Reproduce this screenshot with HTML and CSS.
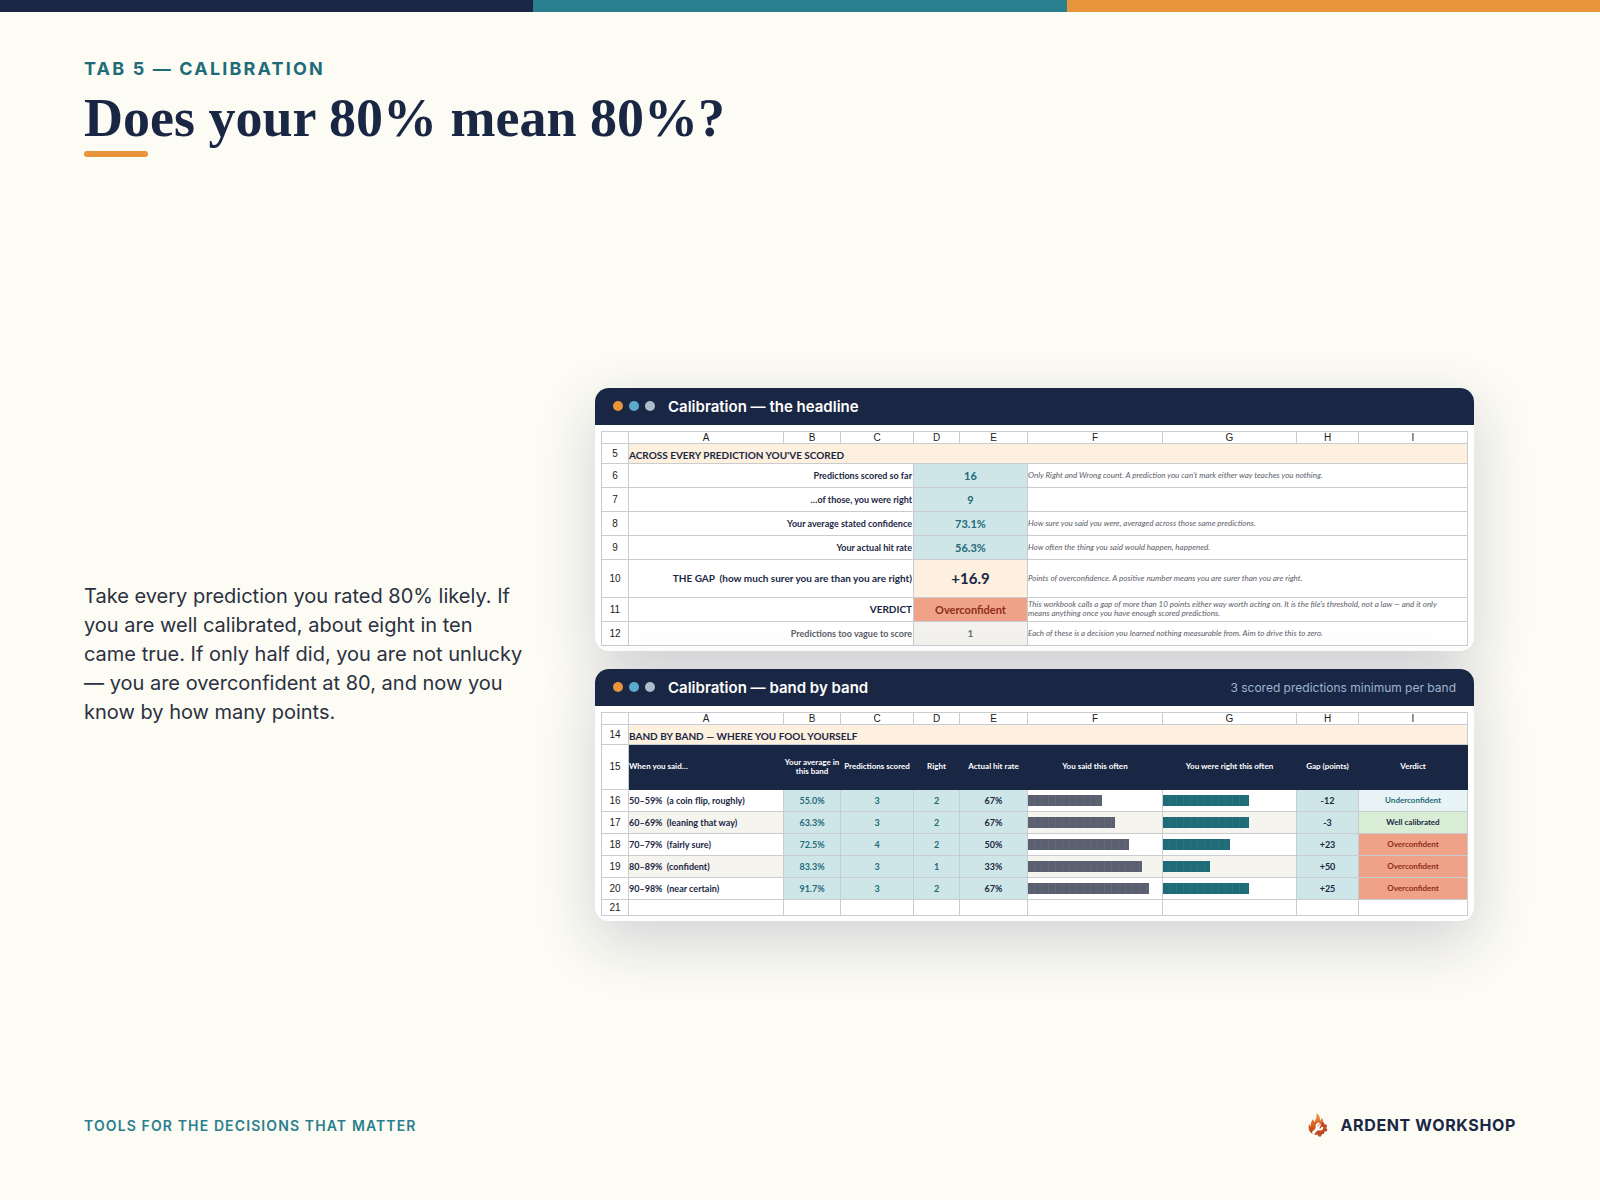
FILE: index.html
```html
<!DOCTYPE html>
<html lang="en">
<head>
    <meta charset="UTF-8">
    <meta name="viewport" content="width=device-width, initial-scale=1.0">
    <title>Does your 80% mean 80%?</title>
    <link rel="stylesheet" href="styles.css">
</head>
<body>
    <div class="stripes">
        <div class="stripe navy"></div>
        <div class="stripe teal"></div>
        <div class="stripe orange"></div>
    </div>
    <div class="slide">
        <header class="head">
            <p class="eyebrow">TAB 5 — CALIBRATION</p>
            <h1 class="title">Does your 80% mean 80%?</h1>
            <div class="rule"></div>
        </header>

        <main class="content">
            <p class="text">Take every prediction you rated 80% likely. If you are well calibrated, about eight in ten came true. If only half did, you are not unlucky — you are overconfident at 80, and now you know by how many points.</p>
            <div class="panels">
                <section class="panel">
                    <div class="panel-head">
                        <span class="dot orange"></span>
                        <span class="dot blue"></span>
                        <span class="dot gray"></span>
                        <h2 class="panel-title">Calibration — the headline</h2>
                    </div>
                    <div class="panel-body">
                        <table class="sheet">
                            <colgroup>
                                <col class="col-n"><col class="col-a"><col class="col-b"><col class="col-c"><col class="col-d"><col class="col-e"><col class="col-f"><col class="col-g"><col class="col-h"><col class="col-i">
                            </colgroup>
                            <tr class="letters"><th></th><th>A</th><th>B</th><th>C</th><th>D</th><th>E</th><th>F</th><th>G</th><th>H</th><th>I</th></tr>
                            <tr class="section"><th>5</th><td colspan="9">ACROSS EVERY PREDICTION YOU'VE SCORED</td></tr>
                            <tr class="stat"><th>6</th><td class="label" colspan="3">Predictions scored so far</td><td class="value" colspan="2">16</td><td class="note" colspan="4">Only Right and Wrong count. A prediction you can't mark either way teaches you nothing.</td></tr>
                            <tr class="stat"><th>7</th><td class="label" colspan="3">…of those, you were right</td><td class="value" colspan="2">9</td><td class="note" colspan="4"></td></tr>
                            <tr class="stat"><th>8</th><td class="label" colspan="3">Your average stated confidence</td><td class="value" colspan="2">73.1%</td><td class="note" colspan="4">How sure you said you were, averaged across those same predictions.</td></tr>
                            <tr class="stat"><th>9</th><td class="label" colspan="3">Your actual hit rate</td><td class="value" colspan="2">56.3%</td><td class="note" colspan="4">How often the thing you said would happen, happened.</td></tr>
                            <tr class="stat gap"><th>10</th><td class="label big" colspan="3">THE GAP&nbsp; (how much surer you are than you are right)</td><td class="value" colspan="2">+16.9</td><td class="note" colspan="4">Points of overconfidence. A positive number means you are surer than you are right.</td></tr>
                            <tr class="stat"><th>11</th><td class="label big" colspan="3">VERDICT</td><td class="value over" colspan="2">Overconfident</td><td class="note" colspan="4">This workbook calls a gap of more than 10 points either way worth acting on. It is the file's threshold, not a law — and it only means anything once you have enough scored predictions.</td></tr>
                            <tr class="stat vague"><th>12</th><td class="label" colspan="3">Predictions too vague to score</td><td class="value" colspan="2">1</td><td class="note" colspan="4">Each of these is a decision you learned nothing measurable from. Aim to drive this to zero.</td></tr>
                        </table>
                    </div>
                </section>

                <section class="panel">
                    <div class="panel-head">
                        <span class="dot orange"></span>
                        <span class="dot blue"></span>
                        <span class="dot gray"></span>
                        <h2 class="panel-title">Calibration — band by band</h2>
                        <span class="panel-note">3 scored predictions minimum per band</span>
                    </div>
                    <div class="panel-body">
                        <table class="sheet">
                            <colgroup>
                                <col class="col-n"><col class="col-a"><col class="col-b"><col class="col-c"><col class="col-d"><col class="col-e"><col class="col-f"><col class="col-g"><col class="col-h"><col class="col-i">
                            </colgroup>
                            <tr class="letters"><th></th><th>A</th><th>B</th><th>C</th><th>D</th><th>E</th><th>F</th><th>G</th><th>H</th><th>I</th></tr>
                            <tr class="section"><th>14</th><td colspan="9">BAND BY BAND — WHERE YOU FOOL YOURSELF</td></tr>
                            <tr class="names"><th>15</th><td class="first">When you said…</td><td>Your average in this band</td><td>Predictions scored</td><td>Right</td><td>Actual hit rate</td><td>You said this often</td><td>You were right this often</td><td>Gap (points)</td><td>Verdict</td></tr>
                            <tr class="band"><th>16</th><td class="range">50–59%&nbsp; (a coin flip, roughly)</td><td class="num">55.0%</td><td class="num">3</td><td class="num">2</td><td class="num dark">67%</td><td class="chart"><div class="bar said" style="width: 55%;"></div></td><td class="chart"><div class="bar right" style="width: 65%;"></div></td><td class="num dark">-12</td><td class="verdict under">Underconfident</td></tr>
                            <tr class="band alt"><th>17</th><td class="range">60–69%&nbsp; (leaning that way)</td><td class="num">63.3%</td><td class="num">3</td><td class="num">2</td><td class="num dark">67%</td><td class="chart"><div class="bar said" style="width: 65%;"></div></td><td class="chart"><div class="bar right" style="width: 65%;"></div></td><td class="num dark">-3</td><td class="verdict well">Well calibrated</td></tr>
                            <tr class="band"><th>18</th><td class="range">70–79%&nbsp; (fairly sure)</td><td class="num">72.5%</td><td class="num">4</td><td class="num">2</td><td class="num dark">50%</td><td class="chart"><div class="bar said" style="width: 75%;"></div></td><td class="chart"><div class="bar right" style="width: 50%;"></div></td><td class="num dark">+23</td><td class="verdict over">Overconfident</td></tr>
                            <tr class="band alt"><th>19</th><td class="range">80–89%&nbsp; (confident)</td><td class="num">83.3%</td><td class="num">3</td><td class="num">1</td><td class="num dark">33%</td><td class="chart"><div class="bar said" style="width: 85%;"></div></td><td class="chart"><div class="bar right" style="width: 35%;"></div></td><td class="num dark">+50</td><td class="verdict over">Overconfident</td></tr>
                            <tr class="band"><th>20</th><td class="range">90–98%&nbsp; (near certain)</td><td class="num">91.7%</td><td class="num">3</td><td class="num">2</td><td class="num dark">67%</td><td class="chart"><div class="bar said" style="width: 90%;"></div></td><td class="chart"><div class="bar right" style="width: 65%;"></div></td><td class="num dark">+25</td><td class="verdict over">Overconfident</td></tr>
                            <tr class="last"><th>21</th><td></td><td></td><td></td><td></td><td></td><td></td><td></td><td></td><td></td></tr>
                        </table>
                    </div>
                </section>
            </div>
        </main>

        <footer class="foot">
            <p class="tagline">TOOLS FOR THE DECISIONS THAT MATTER</p>
            <div class="brand">
                <svg class="logo" viewBox="0 0 20 24" aria-hidden="true">
                    <defs>
                        <linearGradient id="fire" x1="0" y1="0" x2="0" y2="1">
                            <stop offset="0" stop-color="#f0983c"/>
                            <stop offset="0.5" stop-color="#dc6427"/>
                            <stop offset="1" stop-color="#b03c1c"/>
                        </linearGradient>
                    </defs>
                    <!-- flame -->
                    <path fill="url(#fire)" d="M8.500 0C12 3 12 5 12 8L14 5C15 7 15 8 15 10L11 12L5 21C1 19 0 16 1 11L3 14C2 10 4 8 5 6L6.500 9C8 6 9 4 8.500 0Z"/>
                    <!-- gear -->
                    <path fill="#c04a20" d="M14 9L16 9.500L16.500 11.500L18.500 11.500L19 13.500L18 15L19.500 16.500L18.500 18.500L16.500 18.500L16 21L14 21L13 23.500H10.500L9.500 21.500L7 22L6 20L12 14Z"/>
                    <!-- wrench -->
                    <path fill="none" stroke="#fcfbf4" stroke-width="3" stroke-linecap="round" d="M5.500 19.500L10 15"/>
                    <path fill="none" stroke="#fcfbf4" stroke-width="2" d="M11.500 10.500A3 3 0 1 0 14.500 14"/>
                </svg>
                <span class="brand-name">ARDENT WORKSHOP</span>
            </div>
        </footer>
    </div>
</body>
</html>
```
FILE: styles.css
```css
* {
    margin: 0;
    padding: 0;
    box-sizing: border-box;
}
body {
    min-height: 100vh;
    display: flex;
    flex-direction: column;
    background: #fcfbf4;
    color: #1a2744;
    font-family: Inter, "Liberation Sans", sans-serif;
}
.stripes {
    display: flex;
    height: 12px;
}
.stripe {
    flex: 1;
}
.navy {
    background: #1a2744;
}
.teal {
    background: #2a7f8e;
}
.orange {
    background: #e8943a;
}
.slide {
    flex: 1;
    display: flex;
    flex-direction: column;
    padding: 44px 84px 63px;
}
.eyebrow {
    font-size: 18px;
    line-height: 26px;
    font-weight: 700;
    letter-spacing: 0.12em;
    color: #1f6b78;
}
.title {
    font-family: "Liberation Serif", serif;
    font-size: 54px;
    line-height: 60px;
    font-weight: 700;
    margin-top: 6px;
}
.rule {
    width: 64px;
    height: 6px;
    border-radius: 3px;
    background: #e8943a;
    margin-top: 3px;
}

/* text + panels */
.content {
    flex: 1;
    display: grid;
    grid-template-columns: 440px 1fr;
    align-items: center;
    gap: 28px;
    padding-top: 38px;
}
.text {
    font-size: 20px;
    line-height: 29px;
    color: #2b3140;
}
.panels {
    display: flex;
    flex-direction: column;
    gap: 18px;
    padding: 0 43px;
}
.panel {
    border-radius: 14px;
    background: #fff;
    box-shadow: 0 20px 60px rgba(26, 36, 84, 0.19);
}
.panel-head {
    display: flex;
    align-items: center;
    gap: 6px;
    height: 37px;
    padding: 0 18px;
    border-radius: 14px 14px 0 0;
    background: #1a2744;
}
.dot {
    width: 10px;
    height: 10px;
    border-radius: 50%;
}
.blue {
    background: #5aabce;
}
.gray {
    background: #b0bccb;
}
.panel-title {
    margin-left: 7px;
    font-size: 15px;
    font-weight: 600;
    color: #fff;
}
.panel-note {
    margin-left: auto;
    font-size: 12px;
    color: #9db4cf;
}
.panel-body {
    padding: 6px 6px 5px;
}

/* spreadsheet */
.sheet {
    width: 100%;
    table-layout: fixed;
    border-collapse: collapse;
    font-family: Lato, sans-serif;
    font-size: 9px;
    line-height: 9px;
    font-weight: 700;
}
.col-n { width: 27px; }
.col-a { width: 155px; }
.col-b { width: 57px; }
.col-c { width: 73px; }
.col-d { width: 46px; }
.col-e { width: 68px; }
.col-f { width: 135px; }
.col-g { width: 134px; }
.col-h { width: 62px; }
.col-i { width: 109px; }
.sheet th, .sheet td {
    border: 1px solid #c9cdd0;
    vertical-align: middle;
    text-align: center;
}
.sheet th {
    font-family: "Liberation Sans", sans-serif;
    font-size: 10px;
    font-weight: 400;
    color: #222;
}
.sheet .letters {
    height: 12px;
}
.sheet .section {
    height: 20px;
}
.sheet .section td {
    padding-top: 4px;
    font-size: 10px;
    text-align: left;
    background: #fdf0de;
}
.stat {
    height: 24px;
}
.sheet .label {
    padding-right: 1px;
    text-align: right;
}
.sheet .big {
    font-size: 10px;
}
.sheet .value {
    font-size: 11px;
    color: #1f6b78;
    background: #cfe6e8;
}
.sheet .note {
    padding-right: 10px;
    font-size: 8px;
    font-weight: 400;
    font-style: italic;
    text-align: left;
    color: #5b6068;
}
.gap {
    height: 38px;
}
.sheet .gap .value {
    font-size: 15px;
    color: #1a2744;
    background: #fdf0de;
}
.sheet .over {
    color: #8f2d18;
    background: #efa288;
}
.sheet .vague .label {
    color: #5b6068;
}
.sheet .vague .value {
    font-size: 10px;
    color: #6b6f76;
    background: #f3f2ee;
}
.names {
    height: 45px;
}
.sheet .names td {
    border-color: #1a2744;
    font-size: 8px;
    color: #fff;
    background: #1a2744;
}
.sheet .names .first, .sheet .range {
    text-align: left;
}
.band {
    height: 22px;
}
.alt {
    background: #f5f4ef;
}
.alt th {
    background: #fff;
}
.sheet .num {
    color: #1f6b78;
    background: #cfe6e8;
}
.sheet .dark {
    color: #1a2744;
}
.bar {
    height: 11px;
    background-image: repeating-linear-gradient(90deg, transparent 0 6px, rgba(255, 255, 255, 0.05) 6px 7px);
}
.said {
    background-color: #5b6070;
}
.right {
    background-color: #1f6b78;
}
.sheet .verdict {
    font-size: 8px;
}
.sheet .under {
    color: #1f6b78;
    background: #e8f3f5;
}
.sheet .well {
    background: #d9edd6;
}
.last {
    height: 16px;
}

.foot {
    display: flex;
    align-items: center;
    justify-content: space-between;
}
.tagline {
    font-size: 14px;
    font-weight: 600;
    letter-spacing: 0.08em;
    color: #2a7f8e;
}
.brand {
    display: flex;
    align-items: center;
    gap: 12px;
}
.logo {
    width: 20px;
    height: 24px;
}
.brand-name {
    font-size: 16px;
    font-weight: 700;
    letter-spacing: 0.04em;
}
```
